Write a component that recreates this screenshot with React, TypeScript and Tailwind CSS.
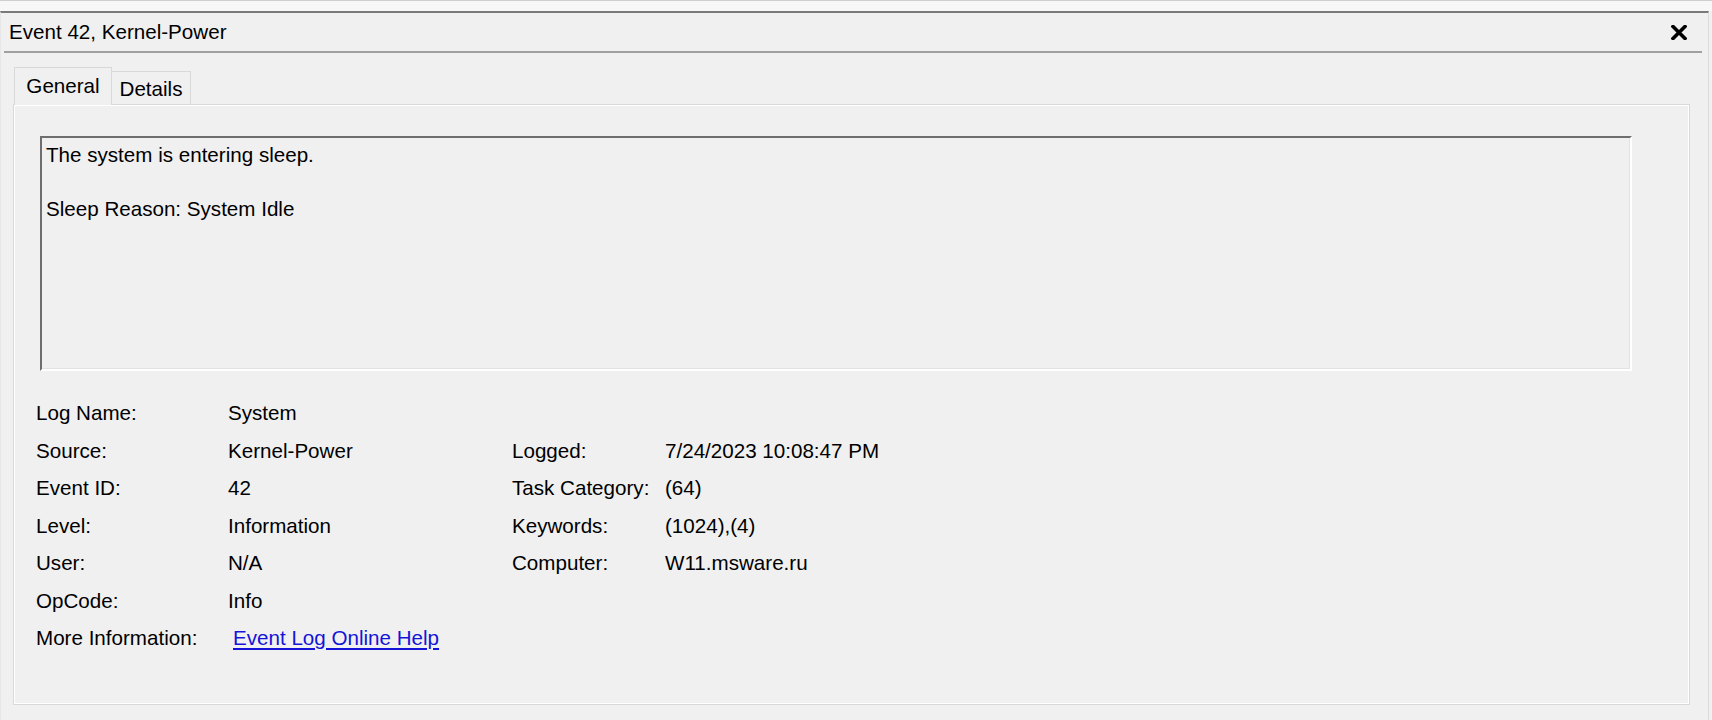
import React from "react";

const leftRows: [string, string][] = [
  ["Log Name:", "System"],
  ["Source:", "Kernel-Power"],
  ["Event ID:", "42"],
  ["Level:", "Information"],
  ["User:", "N/A"],
  ["OpCode:", "Info"],
];

const rightRows: Record<number, [string, string]> = {
  1: ["Logged:", "7/24/2023 10:08:47 PM"],
  2: ["Task Category:", "(64)"],
  3: ["Keywords:", "(1024),(4)"],
  4: ["Computer:", "W11.msware.ru"],
};

function CloseIcon() {
  return (
    <svg width="16" height="15" viewBox="0 0 16 15">
      <path d="M2 1.5 L14 13.5 M14 1.5 L2 13.5" stroke="#000" strokeWidth="3.6" strokeLinecap="square" />
    </svg>
  );
}

export default function App() {
  return (
    <div className="w-[1712px] h-[720px] overflow-hidden bg-[#f0f0f0] font-['Liberation_Sans',Arial,sans-serif] text-[20.6px] text-black">
      <div className="h-[11px] border-t border-[#cfcfcf] bg-[#f7f7f7]" />
      <div className="w-[1709px] h-[709px] border-t-2 border-[#7a7a7a] border-r border-r-[#dcdcdc] border-l border-l-[#e6e6e6] flex flex-col">
        {/* title */}
        <div className="h-[38px] flex items-center justify-between pl-[8px] pr-[21px]">
          <span className="leading-none">Event 42, Kernel-Power</span>
          <CloseIcon />
        </div>
        <div className="ml-[3px] mr-[6px] h-[2px] bg-[#a0a0a0]" />

        {/* tabs */}
        <div className="pl-[12px] pt-[14px] flex flex-col">
          <div className="flex items-end h-[38px] pl-[1px] relative z-10">
            <div className="h-[38px] w-[98px] flex items-center justify-center bg-[#f0f0f0] border border-b-0 border-[#d9d9d9] pb-[1px]">
              General
            </div>
            <div className="h-[34px] w-[79px] flex items-center justify-center border border-l-0 border-[#d9d9d9] bg-[#f0f0f0] pt-[2px]">
              Details
            </div>
          </div>
          <div className="w-[1677px] h-[601px] -mt-[1px] border border-[#d9d9d9] shadow-[inset_1px_1px_0_#ffffff,inset_-1px_-1px_0_#ffffff] flex flex-col">
            {/* message box */}
            <div className="ml-[26px] mt-[31px] w-[1592px] h-[235px] border-2 border-t-[#6e6e6e] border-l-[#6e6e6e] border-b-white border-r-white shadow-[inset_-1px_-1px_0_#e3e3e3] pl-[4px] pt-[3px] leading-[27px]">
              <div>The system is entering sleep.</div>
              <div>&nbsp;</div>
              <div>Sleep Reason: System Idle</div>
            </div>

            {/* details grid */}
            <div className="ml-[22px] mt-[24px] grid grid-cols-[192px_284px_153px_1fr]">
              {leftRows.map(([label, value], i) => (
                <React.Fragment key={label}>
                  <div className="h-[37.5px] flex items-center">{label}</div>
                  <div className="h-[37.5px] flex items-center">{value}</div>
                  <div className="h-[37.5px] flex items-center">{rightRows[i]?.[0] ?? ""}</div>
                  <div className="h-[37.5px] flex items-center">{rightRows[i]?.[1] ?? ""}</div>
                </React.Fragment>
              ))}
              <div className="h-[37.5px] flex items-center">More Information:</div>
              <div className="h-[37.5px] flex items-center col-span-3">
                <a href="#" className="ml-[5px] text-[#1414d8] underline underline-offset-[3px]">
                  Event Log Online Help
                </a>
              </div>
            </div>
          </div>
        </div>
      </div>
    </div>
  );
}
